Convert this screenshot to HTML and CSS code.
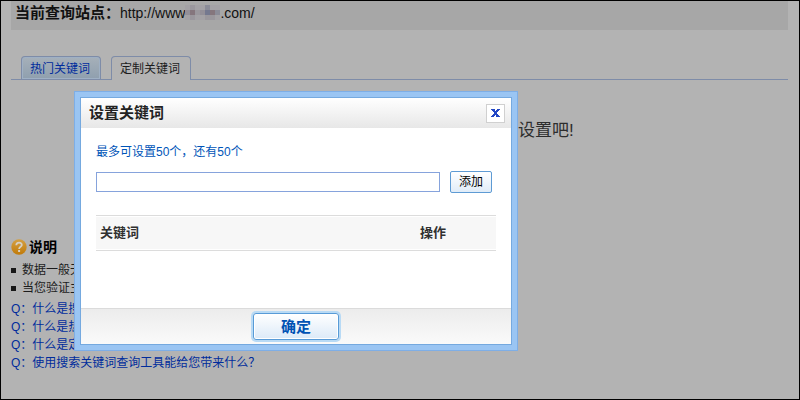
FILE: index.html
```
<!DOCTYPE html>
<html lang="zh-CN">
<head>
<meta charset="utf-8">
<title>设置关键词</title>
<link rel="stylesheet" href="styles.css">
</head>
<body>
<main class="page">
  <div class="site"><strong>当前查询站点：</strong><span>http://www</span><svg class="mosaic" width="35" height="15" viewBox="0 0 35 15" shape-rendering="crispEdges" aria-hidden="true">
      <path fill="#a3a1a5" d="M0 0h35v15H0z"/>
      <path fill="#938f98" d="M0 5h5v5H0zM15 5h5v5h-5z"/>
      <path fill="#85767d" d="M5 5h5v5H5zM25 5h5v5h-5z"/>
      <path fill="#9a979d" d="M5 0h5v5H5zM10 5h5v5h-5zM20 10h10v5H20zM5 10h5v5H5z"/>
      <path fill="#74788f" d="M20 5h5v5h-5z"/>
      <path fill="#8b8c98" d="M30 5h5v5h-5zM20 0h5v5h-5z"/>
    </svg><span>.com/</span></div>
  <nav class="tabs">
    <a class="tab tab-hot" href="#hot">热门关键词</a>
    <a class="tab tab-active" href="#custom">定制关键词</a>
  </nav>
  <p class="message">设置吧!</p>
  <section class="help">
    <h2 class="help-title">
      <svg width="16" height="16" viewBox="0 0 16 16" aria-hidden="true">
        <defs><linearGradient id="gold" x1="0" y1="0" x2="0" y2="1"><stop offset="0" stop-color="#d4a042"/><stop offset="1" stop-color="#c17a08"/></linearGradient></defs>
        <circle cx="8" cy="8" r="7.7" fill="url(#gold)"/>
        <path d="M5.3 6.2C5.3 2.9 10.8 2.9 10.8 6c0 1.8-2.7 1.9-2.7 4" fill="none" stroke="#d6d0c4" stroke-width="1.8"/>
        <path d="M7.1 11h2v2h-2z" fill="#d6d0c4"/>
      </svg>说明</h2>
    <ul class="notes">
      <li>数据一般无</li>
      <li>当您验证主</li>
    </ul>
    <ul class="questions">
      <li><a href="#q1">Q：什么是搜</a></li>
      <li><a href="#q2">Q：什么是热</a></li>
      <li><a href="#q3">Q：什么是定</a></li>
      <li><a href="#q4">Q：使用搜索关键词查询工具能给您带来什么？</a></li>
    </ul>
  </section>
</main>
<div class="dialog" role="dialog" aria-labelledby="dialog-title">
  <div class="panel">
    <header class="dialog-head">
      <h1 id="dialog-title">设置关键词</h1>
      <button class="close" type="button" aria-label="关闭">
        <svg width="9" height="9" viewBox="0 0 9 9" shape-rendering="crispEdges" aria-hidden="true"><path d="M0 0h4v1H0zM6 0h3v1H6zM1 1h3v1H1zM5 1h3v1H5zM2 2h5v1H2zM3 3h3v2H3zM2 5h5v1H2zM1 6h3v1H1zM5 6h3v1H5zM0 7h3v1H0zM5 7h4v1H5z" fill="#2347c5"/></svg>
      </button>
    </header>
    <div class="dialog-body">
      <label class="hint" for="keyword">最多可设置50个，还有50个</label>
      <div class="entry">
        <input id="keyword" class="field" type="text">
        <button class="add" type="button">添加</button>
      </div>
      <table class="words">
        <thead><tr><th scope="col">关键词</th><th class="action" scope="col">操作</th></tr></thead>
      </table>
    </div>
    <footer class="dialog-foot"><button class="ok" type="button">确定</button></footer>
  </div>
</div>
</body>
</html>
```
FILE: styles.css
```
* { box-sizing: border-box; }

body {
  margin: 0;
  min-height: 100vh;
  display: flex;
  position: relative;
  background: #b3b3b3;
  color: #1c1c1c;
  font: 12px/18px "Liberation Sans", "Noto Sans CJK SC", sans-serif;
}

h1, h2, p, ul { margin: 0; padding: 0; }
ul { list-style: none; }
a { color: #002c9c; text-decoration: none; }
button, input { font: inherit; margin: 0; padding: 0; }

.page {
  flex: 1;
  border: 1px solid #000;
  padding: 0 11px 0 10px;
}

.site {
  display: flex;
  align-items: center;
  height: 29px;
  padding: 0 4px 6px;
  background: #a7a7a7;
  color: #111;
  font-size: 14px;
}
.site strong { font-size: 15px; }

.tabs {
  display: flex;
  gap: 10px;
  margin-top: 26px;
  padding-left: 10px;
  border-bottom: 1px solid #7e8ca8;
}
.tab {
  width: 80px;
  height: 23px;
  padding-left: 8px;
  border: 1px solid #7e8ca8;
  border-bottom: 0;
  border-radius: 4px 4px 0 0;
  line-height: 24px;
}
.tab-hot {
  background: linear-gradient(#a6b0b9, #8f9fae);
  box-shadow: inset 0 0 0 1px #9fb0c4;
}
.tab-active {
  height: 24px;
  margin-bottom: -1px;
  background: #b3b3b3;
  color: #1c1c1c;
}

.message {
  padding: 39px 0 0 507px;
  color: #2d2d2d;
  font-size: 17px;
  line-height: 24px;
}

.help { margin-top: 94px; }
.help-title {
  display: flex;
  align-items: center;
  gap: 2px;
  height: 20px;
  color: #000;
  font-size: 14px;
}
.notes { padding-top: 4px; }
.notes li {
  display: flex;
  align-items: center;
  gap: 6px;
}
.notes li::before {
  content: "";
  width: 5px;
  height: 5px;
  background: #171717;
}
.questions { padding-top: 3px; }

.dialog {
  position: absolute;
  left: 74px;
  top: 91px;
  width: 444px;
  padding: 5px;
  border: 1px solid #7eaee6;
  background: #9ac5f3;
}
.panel {
  border: 1px solid #75a9df;
  background: #fff;
}
.dialog-head {
  display: flex;
  align-items: center;
  justify-content: space-between;
  height: 30px;
  padding: 0 6px 0 8px;
  background: linear-gradient(#fff, #e7e7e7);
  color: #222;
}
.dialog-head h1 { font-size: 15px; line-height: 30px; }
.close {
  display: flex;
  align-items: center;
  justify-content: center;
  width: 19px;
  height: 19px;
  border: 1px solid #d0d0d0;
  background: #fff;
}

.dialog-body { padding: 15px 15px 57px; }
.hint { display: block; color: #0055b8; }
.entry {
  display: flex;
  align-items: center;
  gap: 10px;
  margin-top: 10px;
}
.field {
  flex: 1;
  height: 20px;
  border: 1px solid #86a3dc;
  background: #fff;
}
.add {
  width: 42px;
  height: 22px;
  margin-right: 4px;
  border: 1px solid #5e9bd4;
  border-radius: 2px;
  background: linear-gradient(#fff, #e0ecf8);
  color: #000;
}
.words {
  width: 100%;
  margin-top: 22px;
  border-collapse: separate;
  border-spacing: 0;
  border: solid #dcdcdc;
  border-width: 1px 0;
  padding: 1px 0;
}
.words th {
  height: 32px;
  padding: 0 4px;
  background: #f7f7f7;
  color: #303030;
  font-size: 13px;
  text-align: left;
}
.words .action { width: 80px; }

.dialog-foot {
  display: flex;
  justify-content: center;
  height: 36px;
  padding-top: 4px;
  border-top: 1px solid #dbdbdb;
  background: linear-gradient(#ececec, #fafafa);
}
.ok {
  width: 86px;
  height: 27px;
  border: 1px solid #589bd7;
  border-radius: 3px;
  background: linear-gradient(#fff, #dceaf8);
  background-clip: padding-box;
  box-shadow: 0 0 0 2px #b8daf5, inset 0 0 0 1px #fff;
  color: #0052b4;
  font-size: 15px;
  font-weight: bold;
  line-height: 24px;
}
```
